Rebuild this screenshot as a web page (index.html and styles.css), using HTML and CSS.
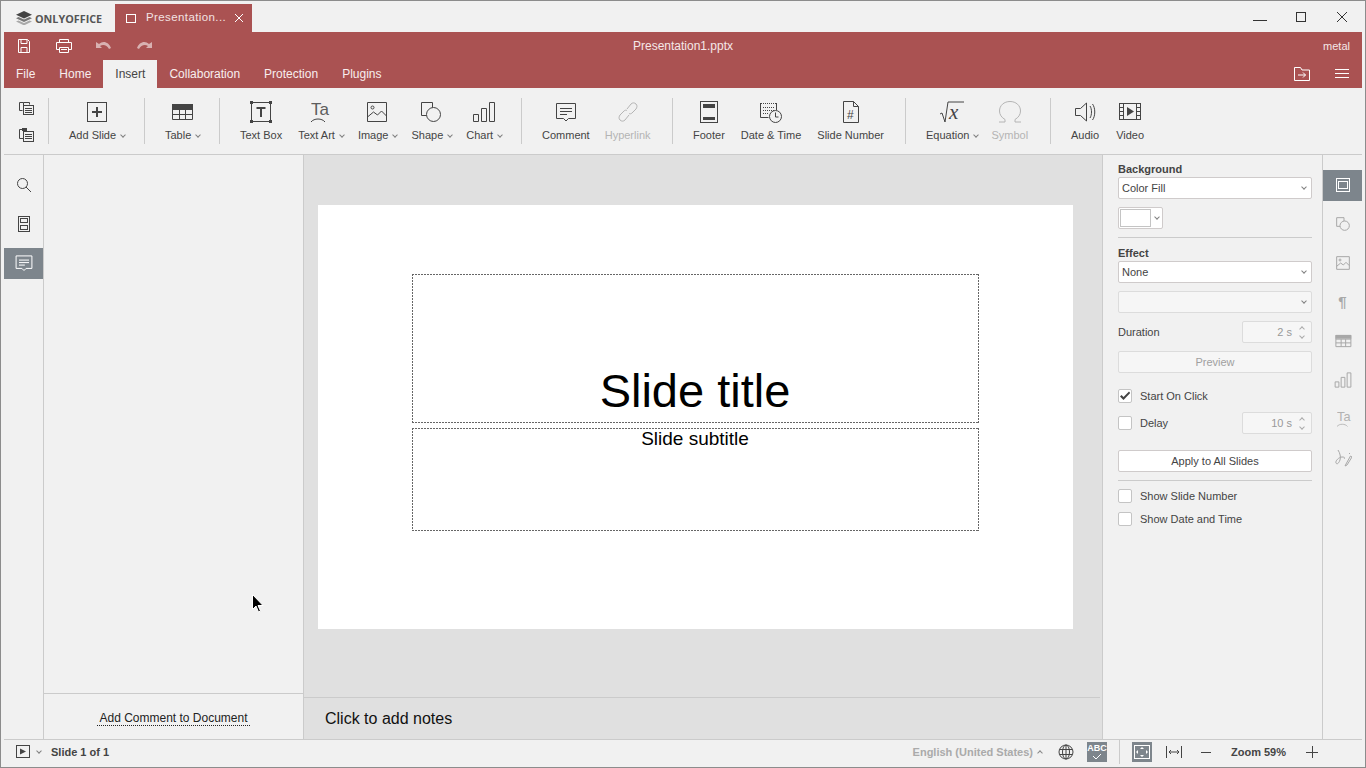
FILE: index.html
```html
<!DOCTYPE html>
<html lang="en">
<head>
  <meta charset="UTF-8" />
  <title>Presentation1.pptx</title>
  <meta name="viewport" content="width=device-width, initial-scale=1">
  <link rel="stylesheet" href="styles.css">
</head>
<body>
  <svg class="sprite" width="0" height="0">
    <symbol id="i-shape" viewBox="0 0 24 24"><path d="M13.500 7.500V2.500H2.500v13h5"/><circle cx="14.500" cy="14.500" r="7"/></symbol>
    <symbol id="i-image" viewBox="0 0 24 24"><rect x="2.500" y="2.500" width="19" height="19"/><circle cx="7.500" cy="7.500" r="1.500"/><path d="M2.500 17l6-5 4 3 4-4 5 5"/></symbol>
    <symbol id="i-table" viewBox="0 0 24 24"><path class="solid" d="M2 4h21v5H2z"/><path d="M2.500 4.500h20v15h-20zM2.500 9.500h20M2.500 14.500h20M9.500 9.500v10M15.500 9.500v10"/></symbol>
    <symbol id="i-chart" viewBox="0 0 24 24"><rect x="1.500" y="14.500" width="5" height="7"/><rect x="9.500" y="8.500" width="5" height="13"/><rect x="17.500" y="2.500" width="5" height="19"/></symbol>
    <symbol id="i-comment" viewBox="0 0 24 24"><path d="M2.500 3.500h19v15h-7l-2.500 2.500-2.500-2.500h-7z"/><path d="M6 8.500h12M6 11.500h12M6 14.500h7"/></symbol>
  </svg>

  <div class="window">
    <div class="titlebar">
      <div class="brand">
        <svg class="ico" width="16" height="14" viewBox="0 0 16 14"><path class="logo-top" d="M8 0l8 3.800-8 3.800-8-3.800z"/><path class="logo-mid" d="M2.500 6l5.500 2.600L13.500 6 16 7.200 8 11 0 7.200z"/><path class="logo-low" d="M2.500 9.400L8 12l5.500-2.600L16 10.600 8 14.400 0 10.600z"/></svg>
        <span>ONLYOFFICE</span>
      </div>
      <div class="doc-tab">
        <span class="doc-tab-mark"></span>
        <span class="doc-tab-name">Presentation...</span>
        <svg class="ico" width="10" height="10" viewBox="0 0 10 10"><path d="M1 1l8 8M9 1l-8 8"/></svg>
      </div>
      <div class="win-buttons">
        <svg class="ico" width="14" height="14" viewBox="0 0 14 14"><path d="M0 10.500h14"/></svg>
        <svg class="ico" width="14" height="14" viewBox="0 0 14 14"><rect x="2.500" y="2.500" width="9" height="9"/></svg>
        <svg class="ico" width="14" height="14" viewBox="0 0 14 14"><path d="M2 2l10 10M12 2l-10 10"/></svg>
      </div>
    </div>

    <header class="header">
      <div class="quick">
        <div class="quick-left">
          <span class="quick-btn"><svg class="ico" width="16" height="16" viewBox="0 0 16 16"><path d="M2.500 1.500h9l2 2v11h-11zM5 1.500v4h6v-4M5 14.500v-5h6v5"/></svg></span>
          <span class="quick-btn"><svg class="ico" width="18" height="16" viewBox="0 0 18 16"><path d="M4.500 4.500v-3h9v3M4.500 11.500h-3v-7h15v7h-3M4.500 9.500h9v5h-9zM6 11.500h6"/></svg></span>
          <span class="quick-btn is-off"><svg class="ico-solid" width="16" height="12" viewBox="0 0 16 12"><path d="M0 2v6h6L4 6c3-2 7-1 9 3l2-1C13 2 7 0 3 4z"/></svg></span>
          <span class="quick-btn is-off"><svg class="ico-solid flip" width="16" height="12" viewBox="0 0 16 12"><path d="M0 2v6h6L4 6c3-2 7-1 9 3l2-1C13 2 7 0 3 4z"/></svg></span>
        </div>
        <div class="doc-title">Presentation1.pptx</div>
        <div class="user-name">metal</div>
      </div>
      <nav class="tabs">
        <span class="tab">File</span>
        <span class="tab">Home</span>
        <span class="tab active">Insert</span>
        <span class="tab">Collaboration</span>
        <span class="tab">Protection</span>
        <span class="tab">Plugins</span>
        <span class="tab-tools">
          <span class="quick-btn"><svg class="ico" width="16" height="14" viewBox="0 0 16 14"><path d="M.5 13.500V.5h6l1.500 2.500h7.500v10.500zM4 8h7.500M9 5.500L11.500 8 9 10.500"/></svg></span>
          <span class="quick-btn"><svg class="ico" width="14" height="10" viewBox="0 0 14 10"><path d="M0 .5h14M0 4.500h14M0 8.500h14"/></svg></span>
        </span>
      </nav>
    </header>

    <div class="toolbar">
      <div class="tb-group g-clip">
        <svg class="ico" width="18" height="18" viewBox="0 0 18 18"><path d="M5.500 5.500V2.500H1.500v8h3M5.500 2.500h6v2"/><rect x="5.500" y="5.500" width="10" height="9"/><path d="M7 8.500h7M7 10.500h7M7 12.500h7"/></svg>
        <svg class="ico" width="18" height="18" viewBox="0 0 18 18"><path d="M5 3.500H1.500v9h4"/><path class="solid" d="M4 2h5v3H4z"/><rect x="5.500" y="5.500" width="10" height="10"/><path d="M7 8.500h7M7 10.500h7M7 12.500h7"/></svg>
      </div>
      <div class="tb-group g-slide">
        <div class="tool">
          <svg class="ico" width="24" height="24" viewBox="0 0 24 24"><rect x="2.500" y="2.500" width="19" height="19"/><path class="thick" d="M12 7v10M7 12h10"/></svg>
          <span class="tool-label">Add Slide<i class="caret"></i></span>
        </div>
      </div>
      <div class="tb-group g-table">
        <div class="tool">
          <svg class="ico" width="24" height="24"><use href="#i-table"/></svg>
          <span class="tool-label">Table<i class="caret"></i></span>
        </div>
      </div>
      <div class="tb-group g-objects">
        <div class="tool tool-textbox">
          <svg class="ico" width="24" height="24" viewBox="0 0 24 24"><path d="M2.500 2.500h19v19h-19z"/><path class="solid" d="M1 1h3v3H1zM20 1h3v3h-3zM1 20h3v3H1zM20 20h3v3h-3z"/><path class="thick" d="M7.500 8h9M12 8v9"/></svg>
          <span class="tool-label">Text Box</span>
        </div>
        <div class="tool">
          <svg class="ico" width="24" height="24" viewBox="0 0 24 24"><text class="ico-text" x="2" y="15" font-size="17">Ta</text><path d="M2 22c3-4 11-4 14 0"/></svg>
          <span class="tool-label">Text Art<i class="caret"></i></span>
        </div>
        <div class="tool">
          <svg class="ico" width="24" height="24"><use href="#i-image"/></svg>
          <span class="tool-label">Image<i class="caret"></i></span>
        </div>
        <div class="tool">
          <svg class="ico" width="24" height="24"><use href="#i-shape"/></svg>
          <span class="tool-label">Shape<i class="caret"></i></span>
        </div>
        <div class="tool">
          <svg class="ico" width="24" height="24"><use href="#i-chart"/></svg>
          <span class="tool-label">Chart<i class="caret"></i></span>
        </div>
      </div>
      <div class="tb-group g-links">
        <div class="tool">
          <svg class="ico" width="24" height="24"><use href="#i-comment"/></svg>
          <span class="tool-label">Comment</span>
        </div>
        <div class="tool is-off">
          <svg class="ico" width="24" height="24" viewBox="0 0 24 24"><path d="M11 9l4-5c1.500-1.500 3.500-1.500 5 0s1 3.500 0 5l-4 4c-1 1-2 1-3 .5M13 15l-4 5c-1.500 1.500-3.500 1.500-5 0s-1-3.500 0-5l4-4c1-1 2-1 3-.5"/></svg>
          <span class="tool-label">Hyperlink</span>
        </div>
      </div>
      <div class="tb-group g-footer">
        <div class="tool">
          <svg class="ico" width="24" height="24" viewBox="0 0 24 24"><rect x="3.500" y="1.500" width="17" height="21"/><path class="solid" d="M6 4h12v4H6zM6 17h12v3H6z"/></svg>
          <span class="tool-label">Footer</span>
        </div>
        <div class="tool">
          <svg class="ico" width="24" height="24" viewBox="0 0 24 24"><path class="dash" d="M2 3.500h15"/><path d="M1.500 3v14.500h8M17.500 3v7"/><path class="dash" d="M4 7.500h11M4 10.500h11M4 13.500h6"/><circle cx="16.500" cy="16.500" r="6"/><path d="M16.500 12.500v4.500h3"/></svg>
          <span class="tool-label">Date &amp; Time</span>
        </div>
        <div class="tool">
          <svg class="ico" width="24" height="24" viewBox="0 0 24 24"><path d="M4.500 1.500h10l5 5v16h-15zM14.500 1.500v5h5"/><text class="ico-hash" x="8" y="19" font-size="12">#</text></svg>
          <span class="tool-label">Slide Number</span>
        </div>
      </div>
      <div class="tb-group g-math">
        <div class="tool">
          <svg class="ico" width="24" height="24" viewBox="0 0 24 24"><path d="M0 14l2-1 3 9 3-20h16"/><text class="ico-x" x="9" y="19" font-size="21">x</text></svg>
          <span class="tool-label">Equation<i class="caret"></i></span>
        </div>
        <div class="tool is-off">
          <svg class="ico" width="24" height="24" viewBox="0 0 24 24"><path d="M1 22h6v-2.500C3.500 17.500 1.500 14.500 1.500 11c0-5.500 4.500-9.500 10.500-9.500s10.500 4 10.500 9.500c0 3.500-2 6.500-5.500 8.500V22h6"/></svg>
          <span class="tool-label">Symbol</span>
        </div>
      </div>
      <div class="tb-group g-media">
        <div class="tool">
          <svg class="ico" width="24" height="24" viewBox="0 0 24 24"><path d="M2.500 8.500h5l6-5.500v18l-6-5.500h-5zM17 6c2 3 2 9 0 12M19.500 4c3 4 3 12 0 16"/></svg>
          <span class="tool-label">Audio</span>
        </div>
        <div class="tool">
          <svg class="ico" width="24" height="24" viewBox="0 0 24 24"><rect x="1.500" y="3.500" width="21" height="16"/><path d="M5.500 3.500v16M18.500 3.500v16M1.500 7.500h4M1.500 11.500h4M1.500 15.500h4M18.500 7.500h4M18.500 11.500h4M18.500 15.500h4"/><path class="solid" d="M9 7l7 4.500L9 16z"/></svg>
          <span class="tool-label">Video</span>
        </div>
      </div>
    </div>

    <main class="main">
      <aside class="rail rail-left">
        <span class="rail-btn"><svg class="ico" width="16" height="16" viewBox="0 0 16 16"><circle cx="6.500" cy="6.500" r="5"/><path d="M10 10l5 5"/></svg></span>
        <span class="rail-btn"><svg class="ico" width="14" height="16" viewBox="0 0 14 16"><rect x="1.500" y=".5" width="11" height="15"/><rect x="3.500" y="2.500" width="7" height="4"/><rect x="3.500" y="9.500" width="7" height="4"/></svg></span>
        <span class="rail-btn active"><svg class="ico" width="20" height="20"><use href="#i-comment"/></svg></span>
      </aside>

      <section class="comments">
        <div class="comments-list"></div>
        <div class="comments-foot"><span class="add-comment">Add Comment to Document</span></div>
      </section>

      <section class="editor">
        <div class="stage">
          <div class="slide">
            <div class="holder holder-title">Slide title</div>
            <div class="holder holder-sub">Slide subtitle</div>
          </div>
        </div>
        <div class="notes">Click to add notes</div>
      </section>

      <aside class="panel">
        <div class="panel-label">Background</div>
        <div class="combo">Color Fill<i class="caret"></i></div>
        <div class="color-btn"><span class="swatch"></span><i class="caret"></i></div>
        <div class="panel-sep"></div>
        <div class="panel-label">Effect</div>
        <div class="combo">None<i class="caret"></i></div>
        <div class="combo is-off gap-8"><i class="caret"></i></div>
        <div class="field-row gap-8">
          <span>Duration</span>
          <span class="spinner">2 s<span class="arrows"><i class="caret up"></i><i class="caret"></i></span></span>
        </div>
        <div class="btn is-off gap-8">Preview</div>
        <label class="check gap-16"><span class="box"><svg class="ico-solid" width="12" height="12" viewBox="0 0 12 12"><path d="M1 6.500l1.500-1.500 2 2L10 1.500 11.200 3 4.500 10z"/></svg></span>Start On Click</label>
        <div class="field-row gap-9">
          <label class="check"><span class="box"></span>Delay</label>
          <span class="spinner">10 s<span class="arrows"><i class="caret up"></i><i class="caret"></i></span></span>
        </div>
        <div class="btn gap-16">Apply to All Slides</div>
        <div class="panel-sep"></div>
        <label class="check gap-8"><span class="box"></span>Show Slide Number</label>
        <label class="check gap-9"><span class="box"></span>Show Date and Time</label>
      </aside>

      <aside class="rail rail-right">
        <span class="rail-btn active"><svg class="ico" width="14" height="14" viewBox="0 0 14 14"><rect x=".5" y=".5" width="13" height="13"/><rect x="2.500" y="3.500" width="9" height="7"/></svg></span>
        <span class="rail-btn"><svg class="ico" width="16" height="16"><use href="#i-shape"/></svg></span>
        <span class="rail-btn"><svg class="ico" width="16" height="16"><use href="#i-image"/></svg></span>
        <span class="rail-btn pilcrow">¶</span>
        <span class="rail-btn"><svg class="ico" width="18" height="18"><use href="#i-table"/></svg></span>
        <span class="rail-btn"><svg class="ico" width="18" height="18"><use href="#i-chart"/></svg></span>
        <span class="rail-btn"><svg class="ico" width="18" height="18" viewBox="0 0 24 24"><text class="ico-text" x="4" y="15" font-size="17">Ta</text><path d="M4 22c3-4 11-4 14 0"/></svg></span>
        <span class="rail-btn"><svg class="ico" width="18" height="18" viewBox="0 0 18 18"><path d="M4 1c2 3 3 7 2 10s-3 5-4 3 3-6 6-6 3 1 2 2M12 15l-1 2 2-1 5-8-1.500-1zM15 4l1 1"/></svg></span>
      </aside>
    </main>

    <footer class="status">
      <svg class="ico" width="14" height="14" viewBox="0 0 14 14"><rect x=".5" y=".5" width="13" height="12"/><path class="solid" d="M4 3.500l6 3-6 3z"/></svg>
      <i class="caret status-caret"></i>
      <b class="slide-count">Slide 1 of 1</b>
      <div class="status-right">
        <b class="lang">English (United States)</b><i class="caret up lang-caret"></i>
        <svg class="ico globe" width="16" height="16" viewBox="0 0 16 16"><circle cx="8" cy="8" r="7"/><ellipse cx="8" cy="8" rx="3.500" ry="7"/><path d="M8 1v14M1.500 5.500h13M1.500 10.500h13"/></svg>
        <span class="status-btn spell"><b>ABC</b><svg class="ico" width="10" height="7" viewBox="0 0 10 7"><path d="M1 3l3 3 5-5"/></svg></span>
        <span class="status-sep"></span>
        <span class="status-btn fit"><svg class="ico" width="16" height="14" viewBox="0 0 16 14"><rect x=".5" y=".5" width="15" height="13"/><path class="solid" d="M8 2l2 2H6zM8 12l-2-2h4zM2 7l2-2v4zM14 7l-2 2V5z"/></svg></span>
        <svg class="ico fit-width" width="16" height="12" viewBox="0 0 16 12"><path d="M.5 0v12M15.500 0v12M3 6h10M5 4L3 6l2 2M11 4l2 2-2 2"/></svg>
        <svg class="ico zoom-out" width="10" height="10" viewBox="0 0 10 10"><path d="M0 5.500h10"/></svg>
        <b class="zoom-text">Zoom 59%</b>
        <svg class="ico zoom-in" width="12" height="12" viewBox="0 0 12 12"><path d="M0 6.500h12M6.500 0v12"/></svg>
      </div>
    </footer>
  </div>

  <svg class="pointer" width="12" height="19" viewBox="0 0 12 19"><path d="M.5.5v15l3.500-3.500 2.500 6 2-1-2.500-5.500h5z"/></svg>
</body>
</html>
```

FILE: styles.css
```css
* {
  box-sizing: border-box;
}
body {
  margin: 0;
  width: 1366px;
  height: 768px;
  overflow: hidden;
  position: relative;
  font-family: "Liberation Sans", Arial, sans-serif;
  font-size: 11px;
  color: #444;
  background: #f1f1f1;
}
.sprite {
  position: absolute;
}
.sprite * {
  vector-effect: non-scaling-stroke;
}
.window {
  height: 768px;
  display: flex;
  flex-direction: column;
  border: 1px solid #8c8c8c;
  padding: 0 3px;
}

/* icons */
.ico {
  display: block;
  flex: none;
  fill: none;
  stroke: currentColor;
  stroke-width: 1;
}
.solid {
  fill: currentColor;
  stroke: none;
}
.thick {
  stroke-width: 2;
}
.dash {
  stroke-dasharray: 1 1;
}
.ico-solid {
  display: block;
  fill: currentColor;
}
.flip {
  transform: scaleX(-1);
}
.ico-text,
.ico-hash,
.ico-x {
  fill: currentColor;
  stroke: none;
}
.ico-text {
  font-family: "Liberation Sans", sans-serif;
  opacity: .85;
}
.ico-hash {
  font-family: "Liberation Sans", sans-serif;
}
.ico-x {
  font-family: "Liberation Serif", serif;
  font-style: italic;
}
.caret {
  display: inline-block;
  width: 4px;
  height: 4px;
  margin: 0 2px 2px 5px;
  border-right: 1px solid #808080;
  border-bottom: 1px solid #808080;
  transform: rotate(45deg);
}
.caret.up {
  transform: rotate(225deg);
}

/* title bar */
.titlebar {
  height: 31px;
  flex: none;
  display: flex;
  align-items: flex-end;
}
.brand {
  width: 111px;
  height: 28px;
  display: flex;
  align-items: center;
  gap: 3px;
  padding-left: 12px;
  font-family: "Open Sans", sans-serif;
  font-weight: 700;
  font-size: 10.800px;
  color: #555;
}
.logo-top {
  fill: #444;
  stroke: none;
}
.logo-mid {
  fill: #777;
  stroke: none;
}
.logo-low {
  fill: #aaa;
  stroke: none;
}
.doc-tab {
  width: 137px;
  height: 28px;
  display: flex;
  align-items: center;
  padding-left: 11px;
  background: #aa5252;
  color: #fff;
}
.doc-tab-mark {
  width: 10px;
  height: 9px;
  border: 1px solid #fff;
}
.doc-tab-name {
  width: 88px;
  margin: 0 0 2px 10px;
  font-size: 11.500px;
  letter-spacing: .4px;
  color: #f3e3e3;
}
.win-buttons {
  margin-left: auto;
  height: 31px;
  display: flex;
  align-items: center;
  gap: 27px;
  padding-right: 13px;
  color: #333;
}

/* red header */
.header {
  height: 56px;
  flex: none;
  background: #aa5252;
  color: #fff;
}
.quick {
  height: 28px;
  display: grid;
  grid-template-columns: 1fr auto 1fr;
  align-items: center;
}
.quick-left {
  display: flex;
}
.quick-btn {
  width: 40px;
  height: 28px;
  display: flex;
  align-items: center;
  justify-content: center;
}
.quick-btn.is-off {
  opacity: .55;
}
.doc-title {
  font-size: 12px;
  color: #f5e8e8;
}
.user-name {
  text-align: right;
  padding-right: 12px;
  color: #f5e8e8;
}
.tabs {
  height: 28px;
  display: flex;
  font-size: 12px;
}
.tab {
  padding: 0 12px;
  line-height: 28px;
  color: #f8eeee;
}
.tab.active {
  background: #f1f1f1;
  color: #444;
}
.tab-tools {
  margin-left: auto;
  display: flex;
}

/* toolbar */
.toolbar {
  height: 67px;
  flex: none;
  display: flex;
  padding-top: 10px;
  border-bottom: 1px solid #cbcbcb;
}
.tb-group {
  height: 46px;
  display: flex;
  padding: 0 20px;
  gap: 15px;
  border-right: 1px solid #cbcbcb;
}
.g-clip {
  width: 45px;
  padding: 2px 0 0 14px;
  flex-direction: column;
  gap: 8px;
}
.g-slide {
  width: 96px;
}
.g-table {
  width: 75px;
}
.g-objects {
  width: 302px;
  gap: 12px;
}
.g-links {
  width: 151px;
}
.g-footer {
  width: 233px;
  gap: 16px;
}
.g-math {
  width: 145px;
  gap: 11px;
}
.g-media {
  border-right: 0;
  gap: 17px;
}
.tool {
  display: flex;
  flex-direction: column;
  align-items: center;
  white-space: nowrap;
}
.tool .ico {
  margin-top: 2px;
}
.tool:has(.caret) .ico {
  margin-right: 3px;
}
.tool-textbox {
  margin-right: 4px;
}
.tool-label {
  margin-top: 4px;
  line-height: 14px;
}
.tool.is-off {
  color: #b4b4b4;
}

/* main area */
.main {
  flex: 1;
  min-height: 0;
  display: flex;
}
.rail {
  flex: none;
  display: flex;
  flex-direction: column;
  gap: 8px;
  padding-top: 15px;
}
.rail-left {
  width: 40px;
  border-right: 1px solid #cbcbcb;
}
.rail-right {
  width: 39px;
  color: #a8a8a8;
}
.rail-btn {
  height: 31px;
  display: flex;
  align-items: center;
  justify-content: center;
  padding-bottom: 1px;
}
.rail-btn.active {
  background: #7d858c;
  color: #fff;
}
.pilcrow {
  font-size: 15px;
  font-weight: 700;
  padding-bottom: 3px;
}
.comments {
  width: 260px;
  flex: none;
  display: flex;
  flex-direction: column;
  border-right: 1px solid #cbcbcb;
}
.comments-list {
  flex: 1;
}
.comments-foot {
  height: 46px;
  display: flex;
  align-items: center;
  justify-content: center;
  border-top: 1px solid #cbcbcb;
  padding-top: 4px;
}
.add-comment {
  font-size: 12px;
  color: #222;
  padding: 0 2px;
  line-height: 14px;
  border-bottom: 1px dotted #222;
}
.editor {
  flex: 1;
  min-width: 0;
  display: flex;
  flex-direction: column;
  background: #e0e0e0;
}
.stage {
  flex: 1;
  padding: 50px 0 0 14px;
}
.slide {
  position: relative;
  width: 755px;
  height: 424px;
  background: #fff;
  color: #000;
}
.holder {
  position: absolute;
  left: 94px;
  width: 567px;
  text-align: center;
  background:
    linear-gradient(to right, #666 2px, transparent 2px) 0 0 / 3px 1px repeat-x,
    linear-gradient(to right, #666 2px, transparent 2px) 0 100% / 3px 1px repeat-x,
    linear-gradient(to bottom, #666 2px, transparent 2px) 0 0 / 1px 3px repeat-y,
    linear-gradient(to bottom, #666 2px, transparent 2px) 100% 0 / 1px 3px repeat-y;
}
.holder-title {
  top: 69px;
  height: 149px;
  padding: 90px 1px 0 0;
  font-size: 47px;
  line-height: 54px;
}
.holder-sub {
  top: 223px;
  height: 103px;
  padding: 0 1px 0 0;
  font-size: 19px;
  line-height: 22px;
}
.notes {
  height: 42px;
  flex: none;
  margin-right: 2px;
  padding-left: 21px;
  border-top: 1px solid #cbcbcb;
  font-size: 16px;
  line-height: 41px;
  color: #111;
}

/* right panel */
.panel {
  width: 221px;
  flex: none;
  padding: 7px 10px 0 15px;
  border-left: 1px solid #cbcbcb;
  border-right: 1px solid #cbcbcb;
}
.panel-label {
  font-weight: 700;
  line-height: 15px;
}
.combo {
  height: 22px;
  display: flex;
  align-items: center;
  padding: 0 5px 0 3px;
  background: #fff;
  border: 1px solid #cfcbcb;
  border-radius: 2px;
}
.combo .caret {
  margin: 0 0 2px auto;
}
.is-off.combo {
  background: #f6f6f6;
  border-color: #dcdcdc;
}
.gap-8 {
  margin-top: 8px;
}
.gap-9 {
  margin-top: 9px;
}
.gap-16 {
  margin-top: 16px;
}
.color-btn {
  width: 45px;
  height: 22px;
  margin-top: 8px;
  display: flex;
  align-items: center;
  padding-left: 1px;
  background: #fff;
  border: 1px solid #cfcbcb;
  border-radius: 2px;
}
.color-btn .caret {
  margin-left: 4px;
}
.swatch {
  width: 31px;
  height: 18px;
  background: #fff;
  border: 1px solid #c4c4c4;
}
.panel-sep {
  height: 1px;
  margin: 8px 0;
  background: #cbcbcb;
}
.field-row {
  height: 22px;
  display: flex;
  align-items: center;
  justify-content: space-between;
}
.spinner {
  width: 70px;
  height: 22px;
  display: flex;
  align-items: center;
  justify-content: flex-end;
  color: #999;
  background: #f6f6f6;
  border: 1px solid #dcdcdc;
  border-radius: 2px;
}
.arrows {
  width: 19px;
  display: flex;
  flex-direction: column;
  align-items: center;
  gap: 3px;
}
.arrows .caret {
  margin: 0;
  border-color: #aaa;
}
.btn {
  height: 22px;
  display: flex;
  align-items: center;
  justify-content: center;
  background: #fff;
  border: 1px solid #cfcbcb;
  border-radius: 2px;
}
.btn.is-off {
  color: #a0a0a0;
  background: #f6f6f6;
  border-color: #dcdcdc;
}
.check {
  display: flex;
  align-items: center;
  gap: 8px;
  height: 14px;
}
.box {
  width: 14px;
  height: 14px;
  display: flex;
  align-items: center;
  justify-content: center;
  background: #fff;
  border: 1px solid #c4c4c4;
  border-radius: 2px;
}

/* status bar */
.status {
  height: 28px;
  flex: none;
  display: flex;
  align-items: center;
  padding: 0 0 3px 12px;
  border-top: 1px solid #cbcbcb;
}
.status-caret {
  margin-left: 7px;
}
.slide-count {
  margin-left: 8px;
}
.status-right {
  margin-left: auto;
  display: flex;
  align-items: center;
  padding-right: 44px;
}
.lang {
  color: #aaa;
}
.lang-caret {
  margin: 2px 0 0 5px;
  border-color: #888;
}
.globe {
  margin-left: 16px;
}
.status-btn {
  width: 20px;
  height: 20px;
  background: #7d858c;
  color: #fff;
  display: flex;
  flex-direction: column;
  align-items: center;
  justify-content: center;
}
.spell {
  margin-left: 13px;
  font-size: 9px;
  line-height: 9px;
}
.status-sep {
  width: 1px;
  height: 24px;
  margin: 0 12px;
  background: #cbcbcb;
}
.fit-width {
  margin-left: 14px;
}
.zoom-out {
  margin-left: 19px;
}
.zoom-text {
  margin-left: 20px;
  font-weight: 700;
}
.zoom-in {
  margin-left: 20px;
}

/* mouse pointer in the capture */
.pointer {
  position: absolute;
  left: 252px;
  top: 594px;
  fill: #000;
  stroke: #fff;
}
```
